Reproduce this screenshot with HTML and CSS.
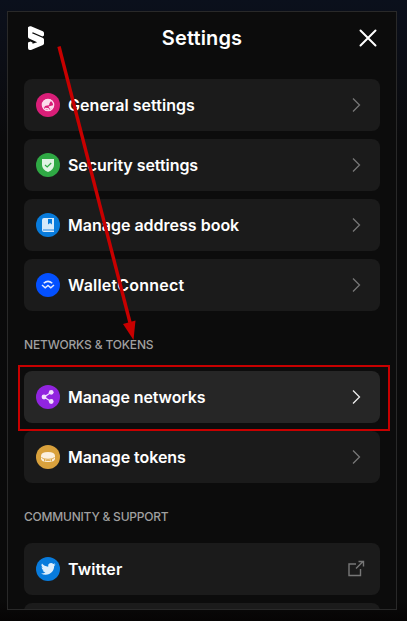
FILE: index.html
```html
<!DOCTYPE html>
<html lang="en">
<head>
<meta charset="utf-8">
<title>Settings</title>
<link rel="stylesheet" href="styles.css">
</head>
<body>
<svg class="defs" width="0" height="0">
  <symbol id="chevron" viewBox="0 0 24 24"><path d="M9 5.500 15.500 12 9 18.500" fill="none" stroke="currentColor" stroke-width="1.300"/></symbol>
</svg>
<main class="panel">
  <header class="header">
    <svg class="logo" width="18" height="24" viewBox="0 0 18 24"><path d="M1 1.200Q2.500-.3 4 .3L15.800 5.200Q17 5.800 17 7v2.500L15.500 10.500 5.800 6.200 5 7.200l11 4.800q1 .5 1 1.600v4q0 1-1 1.400L4 24q-3 .3-3-2v-5.500L3.500 15.500 5.500 16.500v1.200l4.700-1.500L2 12.500q-1-.5-1-1.700Z" fill="#fff"/></svg>
    <h1 class="title">Settings</h1>
    <svg class="close" width="24" height="24" viewBox="0 0 24 24"><path d="m4.500 4.500 15 15m0-15-15 15" stroke="#fff" stroke-width="2" stroke-linecap="round"/></svg>
  </header>
  <section class="group">
    <a class="row">
      <svg class="icon" viewBox="0 0 24 24"><circle cx="12" cy="12" r="12" fill="#d91e78"/><circle cx="12" cy="12" r="5.700" fill="none" stroke="#fbdceb" stroke-width="1.200"/><path d="M6.500 10Q8 6 12 6q3 0 4.500 2l-2 .5-1 1.700-.5 2-2 .3-2 .5-1.500 3ZM12.500 13.500l5.500-1.500-1 3.500-3 .5z" fill="#fbdceb"/><path d="m9 15.500 3 .3 1 1.700" fill="none" stroke="#fbdceb" stroke-width="1.500"/></svg>
      <span class="label general">General settings</span>
      <svg class="arrow"><use href="#chevron"/></svg>
    </a>
    <a class="row">
      <svg class="icon" viewBox="0 0 24 24"><circle cx="12" cy="12" r="12" fill="#2fa944"/><path d="M6 6h12v6q0 4.500-6 7-6-2.500-6-7Z" fill="#e0f3e4"/><path d="m9 12 2.200 2 4-4" fill="none" stroke="#2fa944" stroke-width="1.200"/></svg>
      <span class="label security">Security settings</span>
      <svg class="arrow"><use href="#chevron"/></svg>
    </a>
    <a class="row">
      <svg class="icon" viewBox="0 0 24 24"><circle cx="12" cy="12" r="12" fill="#087bdc"/><path d="M6 7q0-2 2-2h10v11H8.200v1H18v2H8q-2 0-2-2Z" fill="#d7eafb"/><path d="M12 6h4v5.500l-2-1.500-2 1.500Z" fill="#087bdc"/><path d="M7 17h11" stroke="#7eb8ec" stroke-width="2"/></svg>
      <span class="label address">Manage address book</span>
      <svg class="arrow"><use href="#chevron"/></svg>
    </a>
    <a class="row">
      <svg class="icon" viewBox="0 0 24 24"><circle cx="12" cy="12" r="12" fill="#0350ff"/><path d="M7.700 10.200Q12 6.500 16.300 10.200M6 12l3.200 2.800 2.800-2.300 2.800 2.300L18 12" fill="none" stroke="#e4ebff" stroke-width="1.500"/></svg>
      <span class="label wallet">WalletConnect</span>
      <svg class="arrow"><use href="#chevron"/></svg>
    </a>
  </section>
  <h2 class="heading networks-heading">NETWORKS &amp; TOKENS</h2>
  <section class="group">
    <a class="row active">
      <svg class="icon" viewBox="0 0 24 24"><circle cx="12" cy="12" r="12" fill="#9124df"/><path d="m15 7.500-7 4.500 7 4.500" fill="none" stroke="#f2e2fd" stroke-width="1.200"/><g fill="#f2e2fd"><circle cx="15.200" cy="7.300" r="2.400"/><circle cx="8" cy="12" r="2.400"/><circle cx="15.200" cy="16.500" r="2.400"/></g></svg>
      <span class="label networks">Manage networks</span>
      <svg class="arrow"><use href="#chevron"/></svg>
    </a>
    <a class="row">
      <svg class="icon" viewBox="0 0 24 24"><circle cx="12" cy="12" r="12" fill="#d9a13c"/><path d="M5 11q0-4 7-4t7 4v2.500q0 3.500-7 3.500t-7-3.500Z" fill="#fbf0df"/><path d="M5.500 12.500Q7 14.300 12 14.300t6.500-1.800M8.500 14v2.300m7-2.300v2.300M9.500 15.400h5" fill="none" stroke="#d9a13c" stroke-width=".9"/></svg>
      <span class="label tokens">Manage tokens</span>
      <svg class="arrow"><use href="#chevron"/></svg>
    </a>
  </section>
  <h2 class="heading community-heading">COMMUNITY &amp; SUPPORT</h2>
  <section class="group">
    <a class="row">
      <svg class="icon" viewBox="0 0 24 24"><circle cx="12" cy="12" r="12" fill="#087bdc"/><path transform="translate(5 4.600) scale(.61)" d="M23.950 4.570a10 10 0 0 1-2.820.77 4.960 4.960 0 0 0 2.160-2.720c-.95.550-2 .950-3.130 1.180a4.920 4.920 0 0 0-8.380 4.480C7.690 8.090 4.070 6.130 1.640 3.160a4.920 4.920 0 0 0 1.520 6.570 4.900 4.900 0 0 1-2.230-.61v.06a4.920 4.920 0 0 0 3.950 4.830 5 5 0 0 1-2.210.08 4.940 4.940 0 0 0 4.600 3.420A9.870 9.870 0 0 1 0 19.540a14 14 0 0 0 7.550 2.210c9.050 0 14-7.500 14-13.980v-.64a9.900 9.900 0 0 0 2.400-2.560z" fill="#deeefc"/></svg>
      <span class="label twitter">Twitter</span>
      <svg class="external" width="24" height="24" viewBox="0 0 24 24"><path d="M12 7H5v11.500h11.500V12M12 11.500l7-7M14.500 4.500h5V9.500" fill="none" stroke="currentColor" stroke-width="1.400"/></svg>
    </a>
    <a class="row"></a>
  </section>
</main>
<svg class="annotation" width="407" height="621" viewBox="0 0 407 621"><path d="m59 46.500 71 276" stroke="#c80000" stroke-width="3.400"/><path d="m123 324 12.500-3.500L133.500 340Z" fill="#c80000"/><path d="M19 366h370v64H19Z" fill="none" stroke="#c80000" stroke-width="2"/></svg>
</body>
</html>
```
FILE: styles.css
```css
* { box-sizing: border-box; }
body {
  margin: 0;
  height: 621px;
  padding: 11px 0 0 7px;
  overflow: hidden;
  background: linear-gradient(#0b101c, #0b0d14 70px, #0a0a0b 140px, #0a0a0a 600px, #060404);
  color: #fff;
  font-family: Inter, "Liberation Sans", sans-serif;
}
.defs { position: absolute; }
.panel {
  width: 390px;
  height: 599px;
  padding: 0 16px;
  border: 1px solid #292929;
  background: #0c0c0c;
  overflow: hidden;
}
.header {
  display: flex;
  align-items: center;
  justify-content: space-between;
  height: 67px;
  padding-bottom: 15px;
}
.logo { margin-left: 3px; }
.title { margin: 0 0 0 3px; font-size: 20px; line-height: 28px; font-weight: 600; letter-spacing: .15px; }
.group { display: flex; flex-direction: column; gap: 8px; }
.row {
  display: flex;
  align-items: center;
  height: 52px;
  padding: 0 12px;
  border-radius: 8px;
  background: #1b1b1b;
}
.active { background: #262626; }
.icon { width: 24px; height: 24px; margin-right: 8px; flex: none; }
.label { flex: 1; font-size: 16px; line-height: 24px; font-weight: 600; white-space: nowrap; }
.general { letter-spacing: .05px; }
.security { letter-spacing: -.05px; }
.wallet { letter-spacing: .2px; }
.networks { letter-spacing: -.1px; }
.tokens { letter-spacing: -.05px; }
.twitter { letter-spacing: .1px; }
.arrow { width: 24px; height: 24px; color: #777; }
.active .arrow { color: #eee; }
.external { color: #777; }
.heading {
  display: flex;
  align-items: center;
  height: 60px;
  margin: 0;
  padding-top: 8px;
  color: #a0a0a0;
  font-size: 12px;
  line-height: 20px;
  font-weight: 500;
}
.networks-heading { letter-spacing: -.16px; }
.community-heading { letter-spacing: -.22px; }
.annotation { position: absolute; left: 0; top: 0; pointer-events: none; }
```
